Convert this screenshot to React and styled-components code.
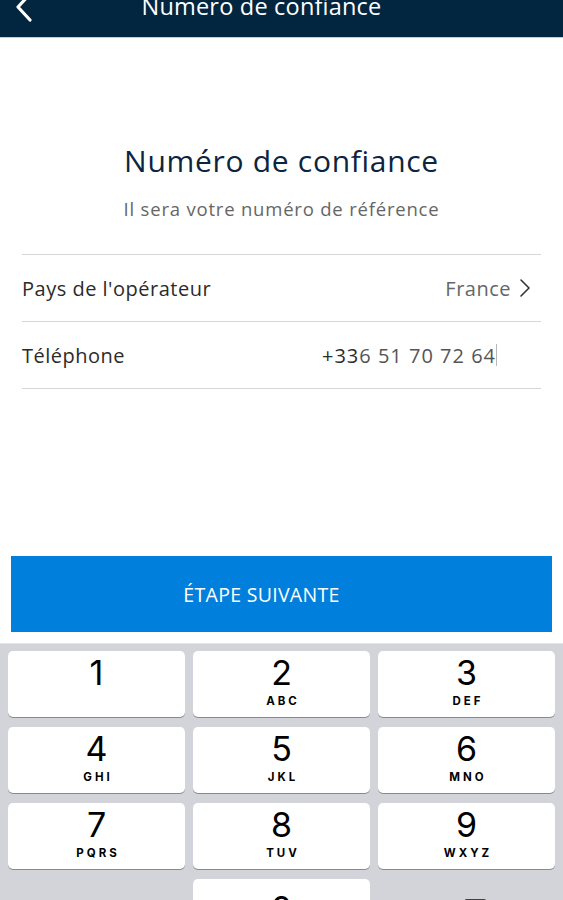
import React from 'react'
import styled, { createGlobalStyle } from 'styled-components'

const GlobalStyle = createGlobalStyle`
    html, body {
        margin: 0;
        padding: 0;
        background: #ffffff;
        font-family: "Open Sans", "Noto Sans", sans-serif;
        overflow: hidden;
    }
`

const keys = [
    { digit: '1', letters: '' },
    { digit: '2', letters: 'ABC' },
    { digit: '3', letters: 'DEF' },
    { digit: '4', letters: 'GHI' },
    { digit: '5', letters: 'JKL' },
    { digit: '6', letters: 'MNO' },
    { digit: '7', letters: 'PQRS' },
    { digit: '8', letters: 'TUV' },
    { digit: '9', letters: 'WXYZ' },
]

function App() {
    return (
        <Page>
            <GlobalStyle />
            <Header>
                <HeaderBar>
                    <BackButton>
                        <svg width="18" height="30" viewBox="0 0 18 30">
                            <path d="M15 2 L3 15 L15 28" fill="none" stroke="#fff" strokeWidth="3.2" strokeLinecap="round" strokeLinejoin="round" />
                        </svg>
                    </BackButton>
                    <HeaderTitle>Numero de confiance</HeaderTitle>
                </HeaderBar>
            </Header>

            <Content>
                <Title>Numéro de confiance</Title>
                <SubTitle>Il sera votre numéro de référence</SubTitle>
                <List>
                    <Row>
                        <Label>Pays de l'opérateur</Label>
                        <Value>
                            France
                            <svg width="14" height="20" viewBox="0 0 14 20">
                                <path d="M3 2 L11 10 L3 18" fill="none" stroke="#333" strokeWidth="1.6" strokeLinecap="round" strokeLinejoin="round" />
                            </svg>
                        </Value>
                    </Row>
                    <Row>
                        <Label>Téléphone</Label>
                        <Phone>
                            <Prefix>+33</Prefix>6 51 70 72 64<Caret />
                        </Phone>
                    </Row>
                </List>
            </Content>

            <NextButton>ÉTAPE SUIVANTE</NextButton>

            <Keyboard>
                {keys.map((k) => (
                    <Key key={k.digit}>
                        <Digit>{k.digit}</Digit>
                        <Letters>{k.letters}</Letters>
                    </Key>
                ))}
                <Key $flat>
                    <Symbols>+ * #</Symbols>
                </Key>
                <Key>
                    <Digit $low>0</Digit>
                </Key>
                <Key $flat>
                    <DeleteIcon width="30" height="22" viewBox="0 0 30 22">
                        <path d="M9 1 H27 a2 2 0 0 1 2 2 V19 a2 2 0 0 1 -2 2 H9 L1 11 Z" fill="none" stroke="#111" strokeWidth="1.6" strokeLinejoin="round" />
                        <path d="M14 6 L23 16 M23 6 L14 16" stroke="#111" strokeWidth="1.6" strokeLinecap="round" />
                    </DeleteIcon>
                </Key>
            </Keyboard>
        </Page>
    )
}

export default App

const Page = styled.div`
    width: 563px;
    display: flex;
    flex-direction: column;
`

const Header = styled.div`
    height: 37px;
    overflow: hidden;
    background: #02263f;
    border-bottom: 1px solid #c9cdd2;
`

const HeaderBar = styled.div`
    height: 60px;
    margin-top: -24px;
    padding-right: 40px;
    display: flex;
    align-items: center;
    justify-content: center;
    position: relative;
`

const BackButton = styled.div`
    position: absolute;
    left: 15px;
    top: 16px;
    display: flex;
`

const HeaderTitle = styled.div`
    color: #ffffff;
    font-size: 23.5px;
    letter-spacing: 0.2px;
`

const Content = styled.div`
    padding: 0 22px;
    display: flex;
    flex-direction: column;
    align-items: center;
`

const Title = styled.h1`
    margin: 103px 0 0;
    font-size: 30px;
    line-height: 40px;
    font-weight: 400;
    letter-spacing: 0.7px;
    color: #0b2540;
`

const SubTitle = styled.p`
    margin: 15px 0 0;
    font-size: 18.5px;
    line-height: 26px;
    letter-spacing: 0.8px;
    color: #666666;
`

const List = styled.div`
    align-self: stretch;
    margin-top: 32px;
    border-top: 1px solid #d6d6d6;
`

const Row = styled.div`
    height: 66px;
    display: flex;
    align-items: center;
    justify-content: space-between;
    border-bottom: 1px solid #d6d6d6;
`

const Label = styled.span`
    font-size: 20px;
    letter-spacing: 0.5px;
    color: #2b2b2b;
`

const Value = styled.span`
    display: flex;
    align-items: center;
    gap: 7px;
    font-size: 20px;
    letter-spacing: 0.5px;
    color: #666666;
    padding-right: 9px;
`

const Phone = styled.span`
    display: flex;
    align-items: center;
    font-size: 20px;
    letter-spacing: 1px;
    color: #555555;
    padding-right: 44px;
`

const Prefix = styled.span`
    color: #2b2b2b;
`

const Caret = styled.span`
    display: inline-block;
    width: 1px;
    height: 22px;
    background: #b8b8b8;
`

const NextButton = styled.button`
    margin: 167px 11px 0;
    padding: 0 40px 0 0;
    height: 76px;
    border: none;
    background: #007fdc;
    color: #ffffff;
    font-family: "Open Sans", sans-serif;
    font-size: 19.5px;
    letter-spacing: 0.3px;
`

const Keyboard = styled.div`
    margin-top: 11px;
    background: #d2d4d9;
    border-top: 1px solid #e4e5e8;
    padding: 7px 8px 8px;
    display: grid;
    grid-template-columns: repeat(3, 1fr);
    column-gap: 8px;
    row-gap: 10px;
`

const Key = styled.div`
    height: 66px;
    box-sizing: border-box;
    padding-bottom: ${(p) => (p.$flat ? '4px' : '0')};
    border-radius: 5px;
    background: ${(p) => (p.$flat ? 'transparent' : '#ffffff')};
    box-shadow: ${(p) => (p.$flat ? 'none' : '0 1px 0 #898a8d')};
    display: flex;
    flex-direction: column;
    align-items: center;
    justify-content: ${(p) => (p.$flat ? 'center' : 'flex-start')};
    font-family: Inter, "Liberation Sans", sans-serif;
    color: #000000;
`

const Digit = styled.div`
    margin-top: ${(p) => (p.$low ? '10px' : '2px')};
    font-size: 34px;
    line-height: 40px;
    font-weight: 400;
`

const Letters = styled.div`
    height: 14px;
    margin-top: 1px;
    font-size: 11.5px;
    line-height: 14px;
    font-weight: 700;
    letter-spacing: 3px;
    margin-right: -3px;
`

const Symbols = styled.div`
    font-size: 24px;
    letter-spacing: 2px;
`

const DeleteIcon = styled.svg`
    margin-left: 10px;
`
